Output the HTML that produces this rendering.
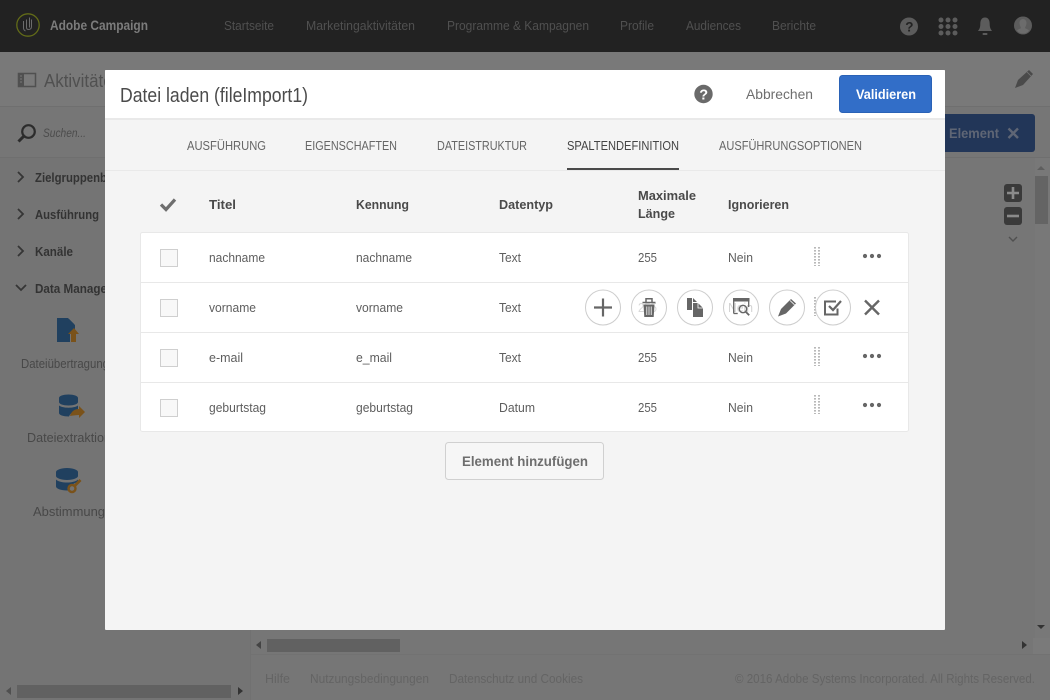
<!DOCTYPE html>
<html lang="de"><head><meta charset="utf-8"><title>Adobe Campaign</title>
<style>
html,body{margin:0;padding:0;width:1050px;height:700px;overflow:hidden;background:#777}
svg{display:block}
text{font-family:"Liberation Sans",sans-serif}
.r{font-size:13px;fill:#5e5e5e}
.h{font-size:13px;font-weight:bold;fill:#4a4a4a}
.t{font-size:12.5px;fill:#666}
.n{font-size:13px;fill:#505050}
.f{font-size:12.5px;fill:#646464}
.s{font-size:13px;font-weight:bold;fill:#333}
.a{font-size:13px;fill:#484848}
</style></head><body>
<svg width="1050" height="700" viewBox="0 0 1050 700" xmlns="http://www.w3.org/2000/svg">
<!-- background -->
<rect width="1050" height="700" fill="#767676"/>
<rect x="0" y="158" width="250" height="542" fill="#747474"/>
<rect x="250" y="158" width="1" height="542" fill="#717171"/>
<rect y="52" width="1050" height="54" fill="#797979"/>
<rect y="106" width="1050" height="1" fill="#6f6f6f"/>
<rect y="107" width="1050" height="51" fill="#767676"/>
<rect y="157" width="1050" height="1" fill="#6f6f6f"/>
<!-- top bar -->
<rect width="1050" height="52" fill="#222"/>
<circle cx="28" cy="25" r="11.2" fill="none" stroke="#626b18" stroke-width="1.300"/>
<path d="M23.500 21v7c0 1.500 1 2.500 2 3M26.500 19.500v8c0 1.500 1 2 2 2 2 0 3-1 3-3v-7M29.500 17.500v10" fill="none" stroke="#6c6c6c" stroke-width="1"/>
<text x="50" y="30" textLength="98" lengthAdjust="spacingAndGlyphs" font-size="14" font-weight="bold" fill="#7c7c7c">Adobe Campaign</text>
<g class="n">
<text x="224" y="30" textLength="50" lengthAdjust="spacingAndGlyphs">Startseite</text>
<text x="306" y="30" textLength="109" lengthAdjust="spacingAndGlyphs">Marketingaktivitäten</text>
<text x="447" y="30" textLength="142" lengthAdjust="spacingAndGlyphs">Programme &amp; Kampagnen</text>
<text x="620" y="30" textLength="34" lengthAdjust="spacingAndGlyphs">Profile</text>
<text x="686" y="30" textLength="55" lengthAdjust="spacingAndGlyphs">Audiences</text>
<text x="772" y="30" textLength="44" lengthAdjust="spacingAndGlyphs">Berichte</text>
</g>
<circle cx="909" cy="26.500" r="9" fill="#5c5c5c"/>
<text x="905.200" y="31.500" font-size="13.500" font-weight="bold" fill="#222">?</text>
<g fill="#5c5c5c"><circle cx="941" cy="20" r="2.500"/><circle cx="948" cy="20" r="2.500"/><circle cx="955" cy="20" r="2.500"/><circle cx="941" cy="26.500" r="2.500"/><circle cx="948" cy="26.500" r="2.500"/><circle cx="955" cy="26.500" r="2.500"/><circle cx="941" cy="33" r="2.500"/><circle cx="948" cy="33" r="2.500"/><circle cx="955" cy="33" r="2.500"/></g>
<path d="M985 17.500c3.500 0 4.700 3 4.700 6.500 0 4 1.300 5.500 2.300 7h-14c1-1.500 2.300-3 2.300-7 0-3.500 1.200-6.500 4.700-6.500z" fill="#5c5c5c"/>
<rect x="982.500" y="33" width="5" height="2" rx="1" fill="#5c5c5c"/>
<circle cx="1023" cy="25.500" r="9" fill="#5c5c5c"/>
<path d="M1023 19c2.300 0 3.500 2 3.500 4s-1.200 4-1.500 5c1 1 3 1 4 2.500-1.500 2-3.500 3-6 3s-4.500-1-6-3c1-1.500 3-1.500 4-2.500-.3-1-1.500-3-1.500-5s1.200-4 3.500-4z" fill="#6c6c6c"/>
<!-- second header -->
<path d="M18.500 73.500h17v13h-17z" fill="none" stroke="#505050" stroke-width="1.500"/><path d="M18 73h6v14h-6z" fill="#505050"/><path d="M20 76h2M20 79h2M20 82h2" stroke="#797979"/>
<text x="44" y="87" font-size="18" fill="#505050" textLength="78" lengthAdjust="spacingAndGlyphs">Aktivitäten</text>
<path d="M1015 88l3-8 11-10 4 4-10 11z" fill="#4a4a4a"/><path d="M1027 72l4 4" stroke="#767676" stroke-width=".8"/>
<!-- element button -->
<rect x="930" y="114" width="105" height="38" rx="3" fill="#223658"/>
<text x="949" y="138" font-size="14" font-weight="bold" fill="#5f6675" textLength="50" lengthAdjust="spacingAndGlyphs">Element</text>
<path d="M1008.500 128.500l9.500 9.500M1018 128.500l-9.500 9.500" stroke="#5f6675" stroke-width="2.400"/>
<!-- sidebar -->
<circle cx="28.500" cy="131.500" r="6.300" fill="none" stroke="#2c2c2c" stroke-width="2.200"/><path d="M23.500 136.500l-5 5" stroke="#2c2c2c" stroke-width="3"/>
<text x="43" y="137" font-size="12" font-style="italic" fill="#4c4c4c" textLength="43" lengthAdjust="spacingAndGlyphs">Suchen...</text>
<g fill="none" stroke="#353535" stroke-width="1.800"><path d="M18 172l5 5-5 5M18 209l5 5-5 5M18 246l5 5-5 5M16 285l5 5 5-5"/></g>
<text x="35" y="182" class="s" textLength="72" lengthAdjust="spacingAndGlyphs">Zielgruppenb</text>
<text x="35" y="219" class="s" textLength="64" lengthAdjust="spacingAndGlyphs">Ausführung</text>
<text x="35" y="256" class="s" textLength="38" lengthAdjust="spacingAndGlyphs">Kanäle</text>
<text x="35" y="293" class="s" textLength="72" lengthAdjust="spacingAndGlyphs">Data Manage</text>
<path d="M57 318h11l7 7v7h-5v10H57z" fill="#20405f"/><path d="M69 319l5 5h-5z" fill="#20405f"/><path d="M74 328l5 6h-3v8h-5v-8h-3z" fill="#7a521a"/>
<text x="21" y="368" class="a" textLength="88" lengthAdjust="spacingAndGlyphs">Dateiübertragung</text>
<path d="M59 398c0-2 4-3.500 9.500-3.500s9.500 1.500 9.500 3.500v4c0 2-4 3.500-9.500 3.500S59 404 59 402zM59 405.500c2 1.500 5.500 2.200 9.500 2.200s7.500-.7 9.500-2.200v4c0 1-1 2-3 2.500-3 0-5 2-6 4.500-6 0-10-1.500-10-3.500z" fill="#20405f"/><path d="M70 416c1-4 4-7 9-7v-3l6 6-6 6v-3c-3 0-6 .5-9 1z" fill="#7a521a"/>
<text x="27" y="442" class="a" textLength="84" lengthAdjust="spacingAndGlyphs">Dateiextraktion</text>
<path d="M56 472c0-2 5-4 11-4s11 2 11 4v4c0 2-5 4-11 4s-11-2-11-4zM56 479.500c2 2 6.500 3 11 3s9-1 11-3v3c-4 0-8 3-9 8-8 .3-13-2-13-4z" fill="#20405f"/><circle cx="72" cy="488.500" r="3.500" fill="none" stroke="#7a521a" stroke-width="2.400"/><path d="M74.500 486l6-6" stroke="#7a521a" stroke-width="2.800"/>
<text x="33" y="516" class="a" textLength="72" lengthAdjust="spacingAndGlyphs">Abstimmung</text>
<!-- right scroll & zoom -->
<rect x="1035" y="158" width="15" height="480" fill="#787878"/>
<rect x="1035" y="176" width="13" height="48" fill="#646464"/>
<path d="M1037 170l4-4 4 4z" fill="#5e5e5e"/><path d="M1037 625l4 4 4-4z" fill="#333"/>
<rect x="1004" y="184" width="18" height="18" rx="3" fill="#3a3a3a"/><path d="M1007 193h12M1013 187v12" stroke="#8a8a8a" stroke-width="2.600"/>
<rect x="1004" y="207" width="18" height="18" rx="3" fill="#3a3a3a"/><path d="M1007 216h12" stroke="#8a8a8a" stroke-width="2.600"/>
<path d="M1009 237l4 4 4-4" fill="none" stroke="#505050" stroke-width="1.400"/>
<!-- horizontal scrollbars -->
<rect x="267" y="639" width="133" height="13" fill="#616161"/><path d="M261 641v8l-5-4z" fill="#444"/><path d="M1022 641v8l5-4z" fill="#333"/>
<rect x="1033" y="638" width="17" height="16" fill="#7a7a7a"/>
<rect x="251" y="654" width="799" height="1" fill="#727272"/>
<rect x="17" y="685" width="214" height="13" fill="#616161"/><path d="M11 687v8l-5-4z" fill="#505050"/><path d="M238 687v8l5-4z" fill="#333"/>
<!-- footer -->
<g class="f">
<text x="265" y="683" textLength="25" lengthAdjust="spacingAndGlyphs">Hilfe</text>
<text x="310" y="683" textLength="119" lengthAdjust="spacingAndGlyphs">Nutzungsbedingungen</text>
<text x="449" y="683" textLength="134" lengthAdjust="spacingAndGlyphs">Datenschutz und Cookies</text>
<text x="735" y="683" textLength="300" lengthAdjust="spacingAndGlyphs">© 2016 Adobe Systems Incorporated. All Rights Reserved.</text>
</g>
<!-- modal -->
<rect x="105" y="70" width="840" height="560" rx="1" fill="#f4f4f4"/>
<path d="M105 118V71a1 1 0 0 1 1-1h838a1 1 0 0 1 1 1v47z" fill="#fff"/>
<rect x="105" y="118" width="840" height="2" fill="#e9e9e9"/>
<rect x="105" y="170" width="840" height="1" fill="#e9e9e9"/>
<text x="120" y="102" font-size="20" fill="#4b4b4b" textLength="188" lengthAdjust="spacingAndGlyphs">Datei laden (fileImport1)</text>
<circle cx="703.500" cy="94" r="9.200" fill="#6a6a6a"/>
<text x="699.300" y="99.500" font-size="14.500" font-weight="bold" fill="#fff">?</text>
<text x="746" y="99" font-size="14" fill="#6e6e6e" textLength="67" lengthAdjust="spacingAndGlyphs">Abbrechen</text>
<rect x="839.500" y="75.500" width="92" height="37" rx="3" fill="#326ec8" stroke="#2a62b6"/>
<text x="856" y="99" font-size="14" font-weight="bold" fill="#fff" textLength="60" lengthAdjust="spacingAndGlyphs">Validieren</text>
<!-- tabs -->
<g class="t">
<text x="187" y="150" textLength="79" lengthAdjust="spacingAndGlyphs">AUSFÜHRUNG</text>
<text x="305" y="150" textLength="92" lengthAdjust="spacingAndGlyphs">EIGENSCHAFTEN</text>
<text x="437" y="150" textLength="90" lengthAdjust="spacingAndGlyphs">DATEISTRUKTUR</text>
<text x="567" y="150" textLength="112" lengthAdjust="spacingAndGlyphs" style="fill:#444">SPALTENDEFINITION</text>
<text x="719" y="150" textLength="143" lengthAdjust="spacingAndGlyphs">AUSFÜHRUNGSOPTIONEN</text>
</g>
<rect x="567" y="168" width="112" height="2" fill="#4a4a4a"/>
<!-- table head -->
<path d="M161 204.500l5 5 9-10" fill="none" stroke="#6e6e6e" stroke-width="3.200"/>
<g class="h">
<text x="209" y="209" textLength="27" lengthAdjust="spacingAndGlyphs">Titel</text>
<text x="356" y="209" textLength="53" lengthAdjust="spacingAndGlyphs">Kennung</text>
<text x="499" y="209" textLength="54" lengthAdjust="spacingAndGlyphs">Datentyp</text>
<text x="638" y="200" textLength="58" lengthAdjust="spacingAndGlyphs">Maximale</text>
<text x="638" y="218" textLength="37" lengthAdjust="spacingAndGlyphs">Länge</text>
<text x="728" y="209" textLength="61" lengthAdjust="spacingAndGlyphs">Ignorieren</text>
</g>
<!-- table -->
<rect x="140.500" y="232.500" width="768" height="199" rx="2" fill="#fff" stroke="#e8e8e8"/>
<path d="M141 282.500h767M141 332.500h767M141 382.500h767" stroke="#e8e8e8"/>
<g fill="#f8f8f8" stroke="#cfcfcf"><rect x="160.500" y="249.500" width="17" height="17"/><rect x="160.500" y="299.500" width="17" height="17"/><rect x="160.500" y="349.500" width="17" height="17"/><rect x="160.500" y="399.500" width="17" height="17"/></g>
<g class="r">
<text x="209" y="262" textLength="56" lengthAdjust="spacingAndGlyphs">nachname</text>
<text x="356" y="262" textLength="56" lengthAdjust="spacingAndGlyphs">nachname</text>
<text x="499" y="262" textLength="22" lengthAdjust="spacingAndGlyphs">Text</text>
<text x="638" y="262" textLength="19" lengthAdjust="spacingAndGlyphs">255</text>
<text x="728" y="262" textLength="25" lengthAdjust="spacingAndGlyphs">Nein</text>
<text x="209" y="312" textLength="47" lengthAdjust="spacingAndGlyphs">vorname</text>
<text x="356" y="312" textLength="47" lengthAdjust="spacingAndGlyphs">vorname</text>
<text x="499" y="312" textLength="22" lengthAdjust="spacingAndGlyphs">Text</text>
<text x="209" y="362" textLength="34" lengthAdjust="spacingAndGlyphs">e-mail</text>
<text x="356" y="362" textLength="36" lengthAdjust="spacingAndGlyphs">e_mail</text>
<text x="499" y="362" textLength="22" lengthAdjust="spacingAndGlyphs">Text</text>
<text x="638" y="362" textLength="19" lengthAdjust="spacingAndGlyphs">255</text>
<text x="728" y="362" textLength="25" lengthAdjust="spacingAndGlyphs">Nein</text>
<text x="209" y="412" textLength="57" lengthAdjust="spacingAndGlyphs">geburtstag</text>
<text x="356" y="412" textLength="57" lengthAdjust="spacingAndGlyphs">geburtstag</text>
<text x="499" y="412" textLength="36" lengthAdjust="spacingAndGlyphs">Datum</text>
<text x="638" y="412" textLength="19" lengthAdjust="spacingAndGlyphs">255</text>
<text x="728" y="412" textLength="25" lengthAdjust="spacingAndGlyphs">Nein</text>
</g>
<!-- grips -->
<g stroke="#a8a8a8" stroke-width="1.600" stroke-dasharray="1.600 1.400" fill="none">
<path d="M815 247v19M819 247v19M815 347v19M819 347v19M815 395v19M819 395v19M815 297v19"/>
</g>
<!-- dots -->
<g fill="#666"><circle cx="865" cy="256" r="2.100"/><circle cx="872" cy="256" r="2.100"/><circle cx="879" cy="256" r="2.100"/><circle cx="865" cy="356" r="2.100"/><circle cx="872" cy="356" r="2.100"/><circle cx="879" cy="356" r="2.100"/><circle cx="865" cy="405" r="2.100"/><circle cx="872" cy="405" r="2.100"/><circle cx="879" cy="405" r="2.100"/></g>
<!-- action circles -->
<g fill="#fff" fill-opacity=".9" stroke="#cdcdcd"><circle cx="603" cy="307.500" r="17.500"/><circle cx="649" cy="307.500" r="17.500"/><circle cx="695" cy="307.500" r="17.500"/><circle cx="741" cy="307.500" r="17.500"/><circle cx="787" cy="307.500" r="17.500"/><circle cx="833" cy="307.500" r="17.500"/></g>
<text x="638" y="312" font-size="13" fill="#d8d8d8" textLength="19" lengthAdjust="spacingAndGlyphs">255</text>
<text x="728" y="312" font-size="13" fill="#d4d4d4" textLength="25" lengthAdjust="spacingAndGlyphs">Nein</text>
<path d="M594 307.500h18M603 298.500v18" stroke="#666" stroke-width="2.200"/>
<path d="M642.500 302.500h13M646 302v-3.200h6v3.200" fill="none" stroke="#666" stroke-width="1.500"/>
<path d="M643.500 304.500h11l-.8 12.500h-9.400z" fill="#666"/><path d="M646.800 306.500v8.500M649 306.500v8.500M651.200 306.500v8.500" stroke="#fff" stroke-width=".8"/>
<path d="M687 298h5v12h-5z" fill="#666"/><path d="M693 298l4 4h-4z" fill="#666"/><path d="M693 303h5l5 5v9h-10z" fill="#666"/><path d="M698 303v5h5" fill="none" stroke="#fff" stroke-width=".8"/>
<path d="M733.700 313.500V299h15v8" fill="none" stroke="#666" stroke-width="1.300"/><rect x="733" y="298" width="16.500" height="3.500" fill="#666"/><path d="M733.700 313.500h4" stroke="#666" stroke-width="1.300"/>
<circle cx="743" cy="309" r="3.700" fill="none" stroke="#666" stroke-width="1.400"/><path d="M745.700 311.700l3.500 3.500" stroke="#666" stroke-width="1.800"/>
<path d="M778 316.500l3-7.500 10-10 5 4.500-10 10z" fill="#666"/><path d="M790 300.500l4.500 4.300" stroke="#fff" stroke-width=".8"/>
<path d="M837.500 308.500v6h-12.500v-13h11" fill="none" stroke="#666" stroke-width="2"/>
<path d="M829 306l4 4 8-9" fill="none" stroke="#666" stroke-width="2.200"/>
<path d="M865 300.500l14 14M879 300.500l-14 14" stroke="#666" stroke-width="2.400"/>
<!-- add button -->
<rect x="445.500" y="442.500" width="158" height="37" rx="3" fill="#f6f6f6" stroke="#d0d0d0"/>
<text x="462" y="466" font-size="14" font-weight="bold" fill="#6e6e6e" textLength="126" lengthAdjust="spacingAndGlyphs">Element hinzufügen</text>
</svg>
</body></html>
